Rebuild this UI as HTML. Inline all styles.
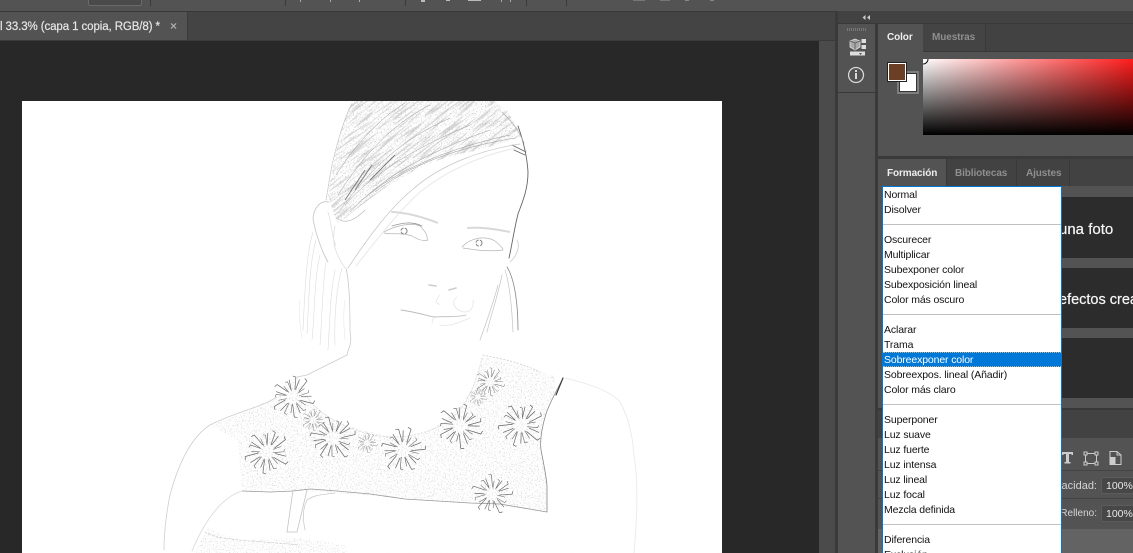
<!DOCTYPE html>
<html><head><meta charset="utf-8"><style>
html,body{margin:0;padding:0;background:#535353}
#r{position:relative;width:1133px;height:553px;overflow:hidden;background:#535353;font-family:"Liberation Sans",sans-serif}
#r div{position:absolute}
.t{white-space:nowrap}
.m{left:884px;height:15px;line-height:15px;font-size:10.5px;color:#111;white-space:nowrap;letter-spacing:-.13px}
.s{left:883px;width:178px;height:1px;background:#c0c0c0}
.tb{font-size:10px;font-weight:bold;white-space:nowrap;color:#8f8f8f;letter-spacing:-.1px}
</style></head><body><div id="r">
<div style="left:0;top:0;width:1133px;height:11px;background:#535353"></div>
<div style="left:88px;top:-8px;width:52px;height:12px;background:#4a4a4a;border:1px solid #6a6a6a;border-radius:2px"></div>
<div style="left:150px;top:0;width:1px;height:6px;background:#3a3a3a"></div>
<div style="left:285px;top:0;width:1px;height:6px;background:#3a3a3a"></div>
<div style="left:300px;top:0;width:1px;height:2px;background:#aaa"></div>
<div style="left:330px;top:0;width:1px;height:2px;background:#aaa"></div>
<div style="left:359px;top:0;width:1px;height:2px;background:#aaa"></div>
<div style="left:405px;top:0;width:1px;height:6px;background:#3a3a3a"></div>
<div style="left:421px;top:0;width:4px;height:2px;background:#bbb"></div>
<div style="left:446px;top:0;width:4px;height:1px;background:#bbb"></div>
<div style="left:468px;top:0;width:13px;height:1px;background:#bbb"></div>
<div style="left:501px;top:0;width:1px;height:2px;background:#aaa"></div>
<div style="left:510px;top:0;width:1px;height:2px;background:#aaa"></div>
<div style="left:526px;top:0;width:1px;height:6px;background:#3a3a3a"></div>
<div style="left:566px;top:0;width:1px;height:6px;background:#3a3a3a"></div>
<div style="left:633px;top:0;width:12px;height:1px;background:#777"></div>
<div style="left:660px;top:0;width:10px;height:1px;background:#777"></div>
<div style="left:685px;top:0;width:4px;height:1px;background:#888"></div>
<div style="left:710px;top:0;width:4px;height:1px;background:#888"></div>

<!-- tab bar -->
<div style="left:0;top:11px;width:836px;height:1px;background:#383838"></div>
<div style="left:0;top:12px;width:835px;height:28px;background:#444"></div>
<div style="left:0;top:12px;width:187px;height:28px;background:#535353;border-right:1px solid #3c3c3c"></div>
<div style="left:0;top:40px;width:835px;height:1px;background:#3a3a3a"></div>
<div class="t" style="left:0;top:20px;font-size:11.5px;line-height:14px;color:#e6e6e6;letter-spacing:-.1px;-webkit-text-stroke:.2px #e6e6e6">l 33.3% (capa 1 copia, RGB/8) *</div>
<div class="t" style="left:170px;top:19px;font-size:12px;line-height:14px;font-weight:bold;color:#a8a8a8">×</div>

<!-- canvas -->
<div style="left:0;top:41px;width:819px;height:512px;background:#282828"></div>
<div style="left:819px;top:41px;width:16px;height:512px;background:#4b4b4b"></div>
<div style="left:835px;top:0;width:3px;height:553px;background:#3a3a3a"></div>
<div style="left:835px;top:0;width:3px;height:11px;background:#535353"></div>

<svg style="position:absolute;left:22px;top:101px" width="700" height="452" viewBox="22 101 700 452">
<defs>
<filter id="sp" x="0" y="0" width="100%" height="100%"><feTurbulence type="fractalNoise" baseFrequency="0.75" numOctaves="2" seed="4"/><feColorMatrix values="0 0 0 0 .35 0 0 0 0 .35 0 0 0 0 .35 7 0 0 0 -3.9"/></filter>
<filter id="fa" x="0" y="0" width="100%" height="100%"><feTurbulence type="fractalNoise" baseFrequency="0.6" numOctaves="2" seed="9"/><feColorMatrix values="0 0 0 0 .6 0 0 0 0 .6 0 0 0 0 .6 5 0 0 0 -3.3"/></filter>
<filter id="ha" x="-20%" y="-20%" width="140%" height="140%"><feTurbulence type="fractalNoise" baseFrequency="0.035 0.55" numOctaves="2" seed="7"/><feColorMatrix values="0 0 0 0 .3 0 0 0 0 .3 0 0 0 0 .3 6 0 0 0 -3"/></filter>
<filter id="bl" filterUnits="userSpaceOnUse" x="22" y="101" width="700" height="452"><feGaussianBlur stdDeviation=".3"/></filter>
<clipPath id="hair"><path d="M352 101C343 120 335 150 328 196L337 222 345 218C380 190 420 160 470 152 490 147 510 141 522 136L508 112 494 101Z"/></clipPath>
<clipPath id="dress"><path d="M210 425L240 412 277 397 297 377 307 397C320 415 340 428 403 438 440 433 462 405 473 387L483 357 510 363 563 378 547 407 540 443 547 487 547 512 470 503 337 493 293 490 242 491 238 440Z"/></clipPath>
<clipPath id="lap"><path d="M207 528L240 540 300 538 345 545 347 553H195Z"/></clipPath>
<path id="p" d="M-2-8L-4-18M2-8L3-21 0-22" fill="none" stroke-linecap="round"/>
<g id="fl" stroke="#666" stroke-width=".7" fill="none">
<use href="#p"/><use href="#p" transform="rotate(33) scale(1.05)"/><use href="#p" transform="rotate(66) scale(.8)"/><use href="#p" transform="rotate(100) scale(1.05)"/><use href="#p" transform="rotate(135) scale(.85)"/><use href="#p" transform="rotate(168) scale(1)"/><use href="#p" transform="rotate(200) scale(.9)"/><use href="#p" transform="rotate(235) scale(1.05)"/><use href="#p" transform="rotate(270) scale(.85)"/><use href="#p" transform="rotate(300) scale(1)"/><use href="#p" transform="rotate(332) scale(.8)"/>
</g>
</defs>
<rect x="22" y="101" width="700" height="452" fill="#fff"/>
<rect x="22" y="101" width="700" height="452" filter="url(#fa)" opacity=".08"/>
<g filter="url(#bl)">
<!-- hair -->
<g clip-path="url(#hair)">
<g transform="rotate(-38 425 170)"><rect x="300" y="70" width="260" height="200" filter="url(#ha)" opacity=".36"/></g>
<rect x="325" y="101" width="200" height="125" filter="url(#sp)" opacity=".42"/>
<g fill="none" stroke="#999" stroke-width=".5">
<path d="M340 210C370 170 400 140 450 118M345 205C372 175 410 150 470 125M350 212C380 180 420 155 490 130M338 195C360 160 390 125 430 105M336 175C355 145 380 118 405 103M362 200C390 175 440 150 510 135M375 192C410 165 455 148 515 138"/>
<path d="M355 190L372 165M345 200L365 170M370 180L395 155" stroke="#777" stroke-width=".9"/>
</g></g>
<g fill="none" stroke-linecap="round">
<path d="M518 126C523 140 527 155 528 172 528 190 522 203 518 214 514 230 512 245 509 258" stroke="#666" stroke-width=".9"/>
<path d="M502 112C510 120 518 128 524 143" stroke="#aaa" stroke-width=".7"/>
<path d="M512 145L526 152M514 150L525 155" stroke="#666" stroke-width=".8"/>
<path d="M352 104C344 118 338 140 332 165 329 180 328 190 326 200" stroke="#c5c5c5" stroke-width=".8" stroke-dasharray="2 1"/>
<path d="M520 144C480 150 440 165 412 190 390 208 370 235 348 268" stroke="#c4c4c4" stroke-width=".7"/>
<path d="M516 148C478 156 445 172 420 192 398 212 378 238 356 266" stroke="#eaeaea" stroke-width="1.1"/>
<path d="M337 218C345 225 355 220 365 210" stroke="#bbb" stroke-width=".7"/>
<!-- ear -->
<path d="M329 202C320 200 314 208 313 218 315 232 322 252 328 262" stroke="#c4c4c4" stroke-width=".8"/>
<path d="M328 212C332 225 332 238 336 246M335 226C332 240 333 250 345 268" stroke="#e0e0e0" stroke-width=".8"/>
<!-- left hair strands -->
<path d="M313 232C306 255 305 290 303 330M316 240C309 265 309 300 307 334M320 255C314 280 315 310 312 340M326 262C322 290 322 320 320 345M335 270C330 295 330 320 328 350M342 268C336 290 334 320 335 345" stroke="#dcdcdc" stroke-width=".6"/>
<path d="M346 268C350 285 350 315 350 332 353 345 347 350 347 355" stroke="#c4c4c4" stroke-width=".7"/>
<path d="M300 300C298 312 300 325 302 338M345 300C342 320 345 335 345 340" stroke="#e8e8e8" stroke-width=".6"/>
<!-- right hair strands -->
<path d="M507 267C515 280 518 305 518 330" stroke="#888" stroke-width=".8"/>
<path d="M505 270C510 285 512 310 513 332M502 275C498 295 491 315 487 332M498 285C494 300 488 318 480 340" stroke="#c4c4c4" stroke-width=".7"/>
<path d="M517 240C520 245 518 255 510 262" stroke="#ccc" stroke-width=".8"/>
<!-- eyes -->
<path d="M384 232C395 226 410 222 420 226 425 231 428 236 427 240M384 233C395 235 400 232 412 236 420 241 425 241 428 240" stroke="#b5b5b5" stroke-width=".7"/>
<circle cx="404" cy="231" r="3" stroke="#888" stroke-width="1" stroke-dasharray="3 2"/>
<path d="M392 226C402 223 412 221 422 226" stroke="#999" stroke-width=".8"/>
<path d="M392 212C410 213 425 218 438 223" stroke="#d8d8d8" stroke-width="2" stroke-dasharray="1.5 1"/>
<path d="M462 247C470 238 485 235 495 241 500 245 503 248 503 250M463 248C475 250 490 252 503 250" stroke="#b5b5b5" stroke-width=".7"/>
<circle cx="479" cy="243" r="3" stroke="#888" stroke-width="1" stroke-dasharray="3 2"/>
<path d="M468 228C480 227 495 229 510 232" stroke="#d8d8d8" stroke-width="2" stroke-dasharray="1.5 1"/>
<!-- nose, mouth -->
<path d="M429 285L436 286M449 290L456 288" stroke="#ccc" stroke-width="1.5"/>
<path d="M440 295C435 300 436 305 440 304M457 297C450 303 455 310 464 312 472 312 474 306 473 300" stroke="#e6e6e6" stroke-width=".8"/>
<path d="M401 310C415 312 425 315 434 317 445 316 455 318 466 315" stroke="#bbb" stroke-width=".9"/>
<path d="M433 318L432 323M440 325C450 327 460 322 470 318" stroke="#e6e6e6" stroke-width=".8"/>
</g>

<!-- dress -->
<g clip-path="url(#dress)">
<rect x="205" y="355" width="350" height="160" filter="url(#sp)" opacity=".34"/>
</g>
<g fill="none" stroke-linecap="round">
<path d="M347 355L307 375 297 377" stroke="#ccc" stroke-width=".8"/>
<path d="M563 378C556 392 549 404 546 414 541 430 540 442 541 450 544 465 547 480 547 487V512" stroke="#888" stroke-width=".8"/>
<path d="M563 378L556 395" stroke="#333" stroke-width="1.1"/>
<path d="M547 512L500 504 470 503 405 499 370 494 337 491 310 489 293 491 270 492 242 491" stroke="#999" stroke-width=".8"/>
<path d="M293 490L287 532H297L307 490" stroke="#c4c4c4" stroke-width=".8"/>
<path d="M307 500C316 494 322 495 335 493M307 500C302 510 303 520 305 530" stroke="#ccc" stroke-width=".8"/>
<path d="M277 397C260 408 235 412 210 425 190 438 178 465 170 495 165 520 164 535 164 550" stroke="#cfcfcf" stroke-width=".8"/>
<path d="M565 378C590 384 612 392 620 402 630 420 633 440 634 456 638 480 638 510 634 553" stroke="#e8e8e8" stroke-width=".8"/>
<path d="M242 491C222 497 205 520 192 551" stroke="#d8d8d8" stroke-width=".8"/>
<path d="M205 532C215 540 245 540 300 545" stroke="#d0d0d0" stroke-width=".8" stroke-dasharray="2 2"/>
<path d="M307 397C320 415 345 430 380 436 410 440 440 430 455 415 468 402 475 385 482 358" stroke="#d8d8d8" stroke-width=".7" stroke-dasharray="2 1.5"/>
<path d="M483 355C495 358 515 360 540 372" stroke="#ccc" stroke-width=".8" stroke-dasharray="1.5 2"/>
</g>
<g clip-path="url(#lap)"><rect x="195" y="525" width="155" height="28" filter="url(#sp)" opacity=".3"/></g>
<use href="#fl" transform="translate(293 397) scale(.95)"/>
<use href="#fl" transform="translate(267 452) rotate(15)"/>
<use href="#fl" transform="translate(333 438) rotate(40)"/>
<use href="#fl" transform="translate(403 450) rotate(-20)"/>
<use href="#fl" transform="translate(460 426) rotate(70)"/>
<use href="#fl" transform="translate(521 425) rotate(25)"/>
<use href="#fl" transform="translate(492 494) scale(.9) rotate(50)"/>
<use href="#fl" transform="translate(490 382) scale(.65)"/>
<use href="#fl" transform="translate(313 420) scale(.5)"/>
<use href="#fl" transform="translate(367 443) scale(.45)"/>
<use href="#fl" transform="translate(478 397) scale(.4)"/>
</g>
</svg>

<!-- dock -->
<div style="left:838px;top:11px;width:295px;height:12px;background:#424242"></div>
<div style="left:838px;top:23px;width:295px;height:1px;background:#383838"></div>
<svg style="position:absolute;left:862px;top:15px" width="9" height="5"><path d="M3.500 0L.5 2.500 3.500 5ZM8 0L5 2.500 8 5Z" fill="#ccc"/></svg>
<div style="left:838px;top:24px;width:37px;height:529px;background:#535353"></div>
<div style="left:838px;top:92px;width:37px;height:1px;background:#383838"></div>
<div style="left:875px;top:24px;width:3px;height:529px;background:#3a3a3a"></div>
<div style="left:847px;top:28px;width:19px;height:3px;background:repeating-linear-gradient(90deg,#777 0 1px,#535353 1px 2px)"></div>
<svg style="position:absolute;left:848px;top:36px" width="20" height="50" viewBox="0 0 20 50">
<path d="M2 5L7 3 12 5V11L7 14 2 11Z" fill="#a8a8a8" stroke="#ddd" stroke-width=".8"/><path d="M2 5L7 7 12 5M7 7V14" fill="none" stroke="#555" stroke-width=".8"/>
<rect x="13.500" y="3" width="4.500" height="4" fill="#ddd"/><rect x="13.500" y="9" width="4.500" height="4" fill="#ddd"/>
<rect x="2" y="15.500" width="15" height="4" fill="#ddd"/><path d="M11 17L14 17 12.500 19Z" fill="#555"/>
<circle cx="8" cy="39" r="7.500" fill="none" stroke="#d8d8d8" stroke-width="1.300"/><rect x="7" y="37" width="2" height="6" fill="#d8d8d8"/><rect x="7" y="34" width="2" height="2" fill="#d8d8d8"/>
</svg>

<!-- color panel -->
<div style="left:878px;top:24px;width:255px;height:27px;background:#424242"></div>
<div style="left:878px;top:51px;width:255px;height:1px;background:#383838"></div>
<div style="left:878px;top:24px;width:45px;height:28px;background:#535353"></div>
<div style="left:923px;top:24px;width:62px;height:27px;background:#444;border-right:1px solid #383838"></div>
<div class="tb" style="left:887px;top:32px;line-height:12px;color:#eee">Color</div>
<div class="tb" style="left:932px;top:32px;line-height:12px">Muestras</div>
<div style="left:878px;top:52px;width:255px;height:104px;background:#535353"></div>
<div style="left:897px;top:71px;width:18px;height:19px;background:#fff;border:2px solid #7e7e7e;box-shadow:inset 0 0 0 1px #333"></div>
<div style="left:887px;top:62px;width:16px;height:16px;background:#6b3f26;border:1px solid #fff;outline:1px solid #222;margin:1px 0 0 1px"></div>
<div style="left:923px;top:59px;width:210px;height:76px;background:linear-gradient(to bottom,rgba(0,0,0,0),#000),linear-gradient(to right,#fff 0,#ff0000 236px)"></div>
<svg style="position:absolute;left:923px;top:59px" width="8" height="8"><circle cx="0" cy="0" r="5" fill="none" stroke="#000" stroke-width="1"/><circle cx="0" cy="0" r="4" fill="none" stroke="#fff" stroke-width="1"/></svg>
<div style="left:878px;top:156px;width:255px;height:3px;background:#3a3a3a"></div>

<!-- formacion panel -->
<div style="left:878px;top:159px;width:255px;height:27px;background:#424242"></div>
<div style="left:878px;top:159px;width:68px;height:28px;background:#535353"></div>
<div style="left:946px;top:159px;width:69px;height:27px;border-right:1px solid #383838;border-left:1px solid #383838"></div>
<div style="left:1016px;top:159px;width:53px;height:27px;border-right:1px solid #383838"></div>
<div class="tb" style="left:887px;top:168px;line-height:12px;color:#eee">Formación</div>
<div class="tb" style="left:955px;top:168px;line-height:12px">Bibliotecas</div>
<div class="tb" style="left:1026px;top:168px;line-height:12px">Ajustes</div>
<div style="left:878px;top:186px;width:255px;height:222px;background:#535353"></div>
<div style="left:882px;top:197px;width:251px;height:61px;background:#2c2c2c"></div>
<div style="left:882px;top:268px;width:251px;height:60px;background:#2c2c2c"></div>
<div style="left:882px;top:338px;width:251px;height:60px;background:#2c2c2c"></div>
<div class="t" style="left:1059px;top:221px;font-size:15px;line-height:18px;color:#f6f6f6;-webkit-text-stroke:.2px #f6f6f6">una foto</div>
<div class="t" style="left:1059px;top:291px;font-size:14.5px;line-height:18px;color:#f6f6f6;-webkit-text-stroke:.2px #f6f6f6">efectos creativos</div>

<!-- layers -->
<div style="left:878px;top:408px;width:255px;height:2px;background:#383838"></div>
<div style="left:878px;top:410px;width:255px;height:28px;background:#424242"></div>
<div style="left:878px;top:438px;width:255px;height:91px;background:#535353"></div>
<div style="left:878px;top:470px;width:255px;height:1px;background:#444"></div>
<div style="left:878px;top:498px;width:255px;height:1px;background:#444"></div>
<div style="left:878px;top:529px;width:255px;height:24px;background:#636363"></div>
<svg style="position:absolute;left:1060px;top:448px" width="73" height="20">
<path d="M2 4H13V7H12L11 6H9V14H10.500V15.500H4.500V14H6V6H4L3 7H2Z" fill="#ccc"/>
<g transform="translate(-1 0)"><rect x="26.500" y="5.500" width="11" height="10" fill="none" stroke="#ccc"/>
<g fill="#535353" stroke="#ccc"><rect x="25" y="4" width="3" height="3"/><rect x="36" y="4" width="3" height="3"/><rect x="25" y="14" width="3" height="3"/><rect x="36" y="14" width="3" height="3"/></g></g>
<g transform="translate(-2 0)"><path d="M52 3.500H59L63 7V16.500H52Z" fill="none" stroke="#ccc"/><path d="M59 3.500V7H63" fill="none" stroke="#ccc"/><rect x="51.500" y="9" width="6" height="8" fill="#ccc"/></g>
</svg>
<div class="t" style="right:36px;top:479px;font-size:11px;line-height:14px;color:#d4d4d4">Opacidad:</div>
<div class="t" style="right:36px;top:507px;font-size:10px;line-height:14px;color:#d4d4d4">Relleno:</div>
<div style="left:1101px;top:477px;width:40px;height:15px;background:#474747;border:1px solid #5c5c5c;border-radius:2px"></div>
<div style="left:1101px;top:505px;width:40px;height:15px;background:#474747;border:1px solid #5c5c5c;border-radius:2px"></div>
<div class="t" style="left:1106px;top:479px;font-size:10.5px;line-height:14px;color:#e8e8e8">100%</div>
<div class="t" style="left:1106px;top:507px;font-size:10.5px;line-height:14px;color:#e8e8e8">100%</div>

<!-- menu -->
<div style="left:882px;top:186px;width:178px;height:380px;background:#fff;border:1px solid #0078d7"></div>
<div class="s" style="top:224px"></div><div class="s" style="top:314px"></div><div class="s" style="top:404px"></div><div class="s" style="top:524px"></div>
<div style="left:883px;top:352px;width:178px;height:13px;background:#0078d7;border-top:1px dotted #c9b28a;border-bottom:1px dotted #c9b28a"></div>
<div class="m" style="top:188px">Normal</div>
<div class="m" style="top:203px">Disolver</div>
<div class="m" style="top:233px">Oscurecer</div>
<div class="m" style="top:248px">Multiplicar</div>
<div class="m" style="top:263px">Subexponer color</div>
<div class="m" style="top:278px">Subexposición lineal</div>
<div class="m" style="top:293px">Color más oscuro</div>
<div class="m" style="top:323px">Aclarar</div>
<div class="m" style="top:338px">Trama</div>
<div class="m" style="top:353px;color:#fff">Sobreexponer color</div>
<div class="m" style="top:368px">Sobreexpos. lineal (Añadir)</div>
<div class="m" style="top:383px">Color más claro</div>
<div class="m" style="top:413px">Superponer</div>
<div class="m" style="top:428px">Luz suave</div>
<div class="m" style="top:443px">Luz fuerte</div>
<div class="m" style="top:458px">Luz intensa</div>
<div class="m" style="top:473px">Luz lineal</div>
<div class="m" style="top:488px">Luz focal</div>
<div class="m" style="top:503px">Mezcla definida</div>
<div class="m" style="top:533px">Diferencia</div>
<div class="m" style="top:548px">Exclusión</div>
</div></body></html>
